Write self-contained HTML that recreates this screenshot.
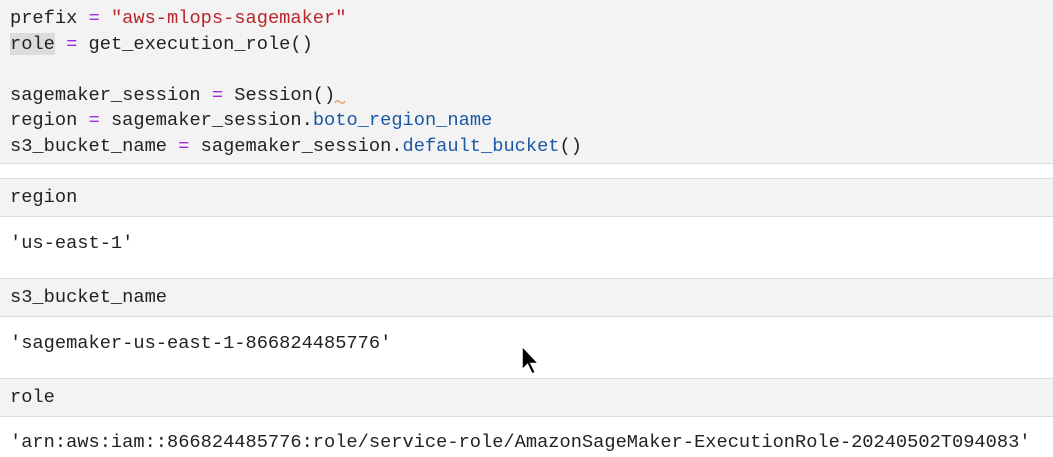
<!DOCTYPE html>
<html><head><meta charset="utf-8"><style>
body{margin:0;width:1053px;height:457px;overflow:hidden;background:#fff;font-family:"Liberation Mono",monospace;font-size:18.7px;color:#222;position:relative}
.r{position:absolute;left:0;width:1053px;box-sizing:border-box;padding-left:10px}
.g{background:#f3f3f3}
.b{border-bottom:1px solid #dcdcdc}
.t{border-top:1px solid #dcdcdc}
.l{height:25.5px;line-height:25.5px;white-space:pre}
.op{color:#a626e0}.s{color:#b9262b}.p{color:#1a58a5}
.hl{background:#dcdcdc}
.c{position:absolute;white-space:pre;line-height:24px}
</style></head><body>
<div class="r g b" style="top:0;height:164px;padding-top:6px">
<div class="l">prefix <span class="op">=</span> <span class="s">"aws-mlops-sagemaker"</span></div>
<div class="l"><span class="hl">role</span> <span class="op">=</span> get_execution_role()</div>
<div class="l"> </div>
<div class="l">sagemaker_session <span class="op">=</span> Session()<svg width="12" height="8" style="vertical-align:-6px;margin-left:-1px" viewBox="0 0 12 8"><path d="M1 5 Q3 1 6 4 T11 3" fill="none" stroke="#e0954a" stroke-width="1.2"/></svg></div>
<div class="l">region <span class="op">=</span> sagemaker_session.<span class="p">boto_region_name</span></div>
<div class="l">s3_bucket_name <span class="op">=</span> sagemaker_session.<span class="p">default_bucket</span>()</div>
</div>
<div class="r g t b" style="top:178px;height:39px"><div class="c" style="top:6px">region</div></div>
<div class="r" style="top:217px;height:61px"><div class="c" style="top:14px">'us-east-1'</div></div>
<div class="r g t b" style="top:278px;height:39px"><div class="c" style="top:6px">s3_bucket_name</div></div>
<div class="r" style="top:317px;height:61px"><div class="c" style="top:14px">'sagemaker-us-east-1-866824485776'</div></div>
<div class="r g t b" style="top:378px;height:39px"><div class="c" style="top:6px">role</div></div>
<div class="r" style="top:417px;height:40px"><div class="c" style="top:13px">'arn:aws:iam::866824485776:role/service-role/AmazonSageMaker-ExecutionRole-20240502T094083'</div></div>
<svg style="position:absolute;left:519px;top:344px" width="24" height="34" viewBox="0 0 24 34"><path d="M3 2 L3 26 L8.5 20.5 L13 30 L16.5 28.5 L12 19.5 L19.5 19.5 Z" fill="#000" stroke="#fff" stroke-width="1.5"/></svg>
</body></html>
